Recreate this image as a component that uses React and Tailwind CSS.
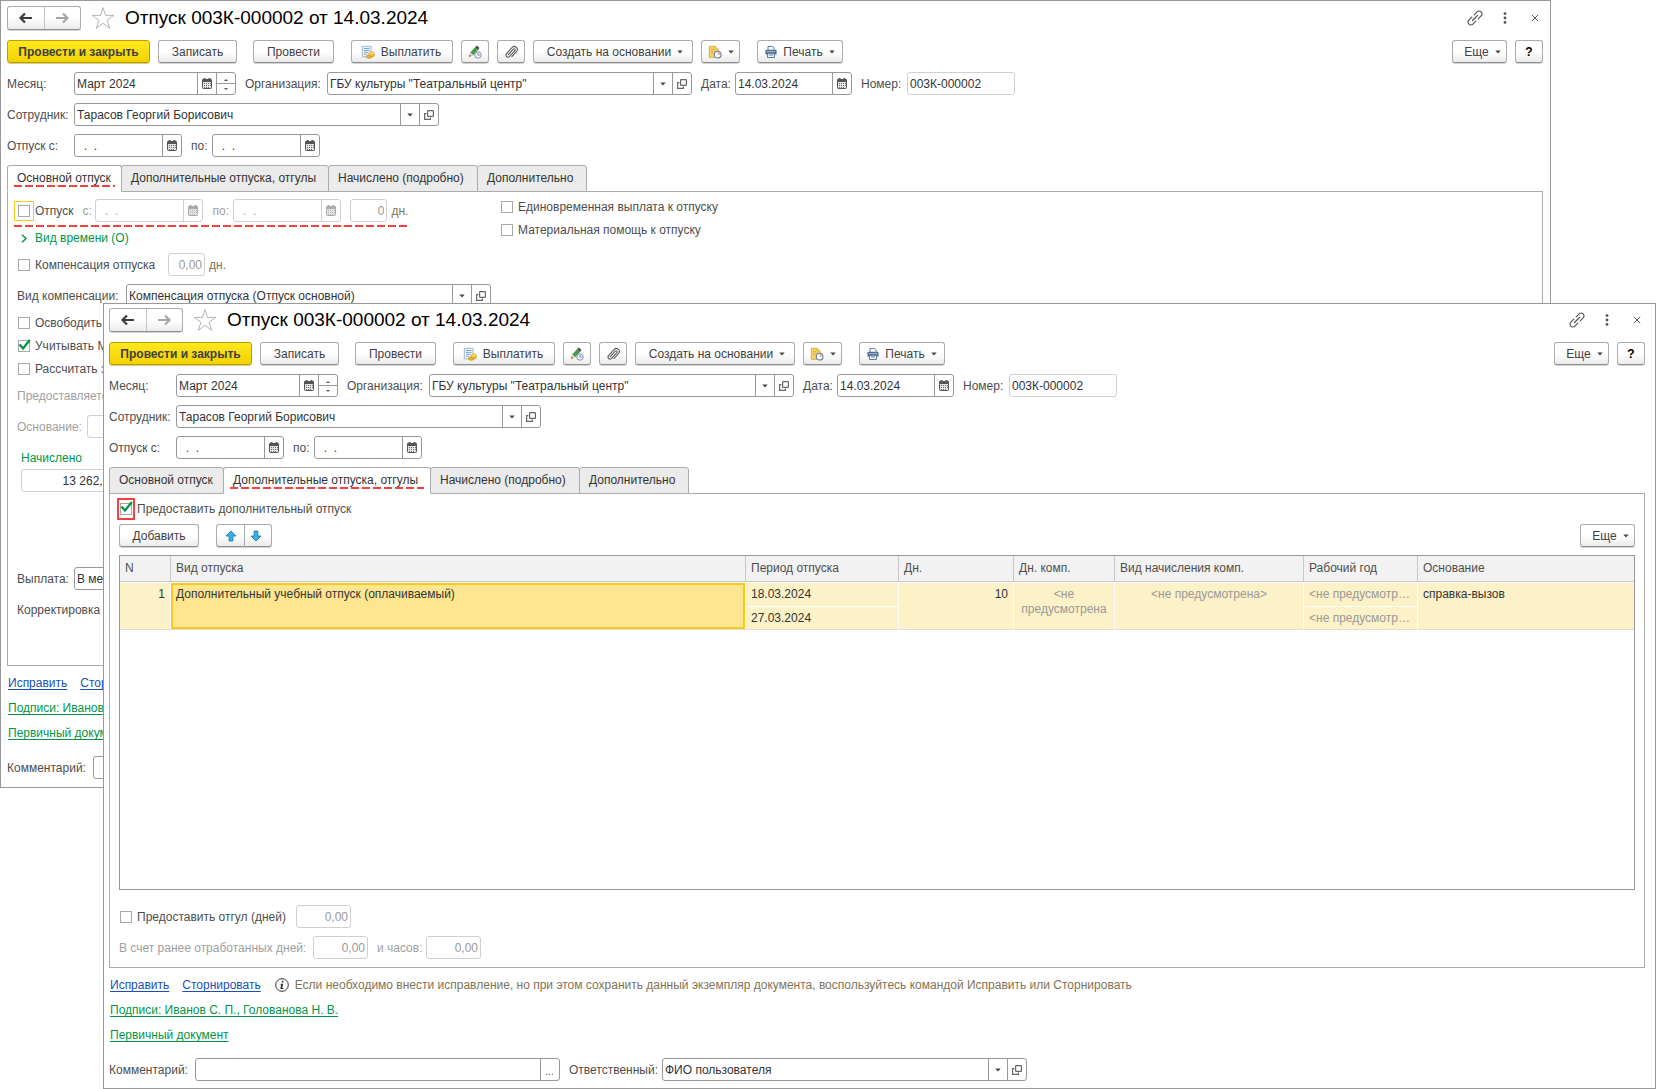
import React, { useId } from 'react';

/* ---------- icons ---------- */

const ArrowIcon = ({ className = '', flip }) => (
  <svg viewBox="0 0 16 12" className={`h-3 w-4 ${className} ${flip ? 'rotate-180' : ''}`} aria-hidden="true">
    <path d="M7 1.500L2.500 6l4.500 4.500M2.500 6H14" fill="none" stroke="currentColor" strokeWidth="2.200" />
  </svg>
);

const StarIcon = () => (
  <svg viewBox="0 0 24 24" className="h-6 w-6 text-[#b4b4b4]" aria-hidden="true">
    <path d="M12 1.500l2.500 7.900h8.300l-6.700 4.800 2.600 8L12 17.300l-6.700 4.900 2.600-8L1.200 9.400h8.300z" fill="none" stroke="currentColor" strokeWidth="1" />
  </svg>
);

const LinkIcon = () => (
  <svg viewBox="0 0 16 16" className="h-4 w-4 text-[#555]" fill="none" stroke="currentColor" strokeWidth="1.2" strokeLinecap="round" aria-hidden="true">
    <path d="M5.500 10.500l5-5" />
    <path d="M7.200 4.800l2.900-2.900a2.700 2.700 0 0 1 4 0 2.700 2.700 0 0 1 0 4l-2.900 2.900" />
    <path d="M8.800 11.200l-2.900 2.900a2.700 2.700 0 0 1-4 0 2.700 2.700 0 0 1 0-4l2.900-2.900" />
  </svg>
);

const DotsIcon = () => (
  <svg viewBox="0 0 4 12" className="h-3 w-1 text-[#555]" fill="currentColor" aria-hidden="true">
    <circle cx="2" cy="1.6" r="1.4" />
    <circle cx="2" cy="6" r="1.4" />
    <circle cx="2" cy="10.4" r="1.4" />
  </svg>
);

const CloseIcon = () => (
  <svg viewBox="0 0 8 8" className="h-2 w-2 text-[#555]" aria-hidden="true">
    <path d="M.8.8l6.400 6.400M7.200.8L.8 7.200" stroke="currentColor" strokeWidth="1" />
  </svg>
);

const Caret = () => (
  <svg viewBox="0 0 6 4" className="h-1 w-1.5 shrink-0 text-[#444]" aria-hidden="true">
    <path d="M.3.4h5.400L3 3.400z" fill="currentColor" />
  </svg>
);

const CalendarIcon = () => (
  <svg viewBox="0 0 10 11" className="h-[11px] w-2.5" aria-hidden="true">
    <path d="M1.500 0h2v2h-2zM6.500 0h2v2h-2z" fill="currentColor" />
    <rect x=".5" y="1.500" width="9" height="9" rx=".8" fill="#e4e4e4" stroke="currentColor" />
    <path d="M0 1.500h10V4H0z" fill="currentColor" />
    <path d="M2 5h1v1H2zM4 5h1v1H4zM6 5h1v1H6zM8 5h1v1H8zM2 7h1v1H2zM4 7h1v1H4zM6 7h1v1H6zM8 7h1v1H8zM2 9h1v1H2zM4 9h1v1H4zM6 9h1v1H6z" fill="currentColor" opacity=".8" />
  </svg>
);

const OpenIcon = () => (
  <svg viewBox="0 0 10 10" className="h-2.5 w-2.5 text-[#666]" fill="none" stroke="currentColor" strokeWidth="1.200" aria-hidden="true">
    <rect x="3.600" y=".6" width="5.800" height="5.800" rx=".6" />
    <path d="M2.400 3.600H.6v5.800h5.800V7.600" />
  </svg>
);

const PayIcon = () => (
  <svg viewBox="0 0 16 16" className="h-3.5 w-3.5 shrink-0" aria-hidden="true">
    <path d="M1.500 1.500h10v12h-10z" fill="#eef5fb" stroke="#8fb0cc" />
    <path d="M3.300 4h6.400M3.300 6.200h6.400M3.300 8.400h5M3.300 10.600h3.400" stroke="#6f9cc4" />
    <ellipse cx="9.300" cy="13.200" rx="3.300" ry="2" fill="#f0b52c" stroke="#c98412" strokeWidth=".6" />
    <ellipse cx="12.300" cy="11.600" rx="3.200" ry="2" fill="#f3b935" stroke="#c98412" strokeWidth=".6" />
    <ellipse cx="12.100" cy="9.600" rx="3.200" ry="2" fill="#fbd661" stroke="#d8961c" strokeWidth=".6" />
  </svg>
);

const PencilClockIcon = () => (
  <svg viewBox="0 0 16 16" className="h-3.5 w-3.5" aria-hidden="true">
    <path d="M1 13.600l1.800-5.400L8 2.600l3.400 3.200-5.200 5.600z" fill="#3f9b4c" />
    <path d="M8 2.600l1.200-1.300c.5-.5 1.300-.5 1.800 0l1.500 1.400c.5.5.5 1.300 0 1.800l-1.100 1.300z" fill="#5a4a45" />
    <path d="M1 13.600l1.800-5.400 3.400 3.200z" fill="#f1c9a0" />
    <path d="M1 13.600l.8-2.400 1.500 1.400z" fill="#b03a2e" />
    <circle cx="11.400" cy="11.400" r="3.700" fill="#f3f8fc" stroke="#7794ad" strokeWidth="1.100" />
    <path d="M11.400 9v2.500h2" fill="none" stroke="#57738c" />
  </svg>
);

const ClipIcon = () => (
  <svg viewBox="0 0 16 16" className="h-3.5 w-3.5 text-[#555]" fill="none" stroke="currentColor" strokeWidth="1.200" strokeLinecap="round" aria-hidden="true">
    <path d="M5 11l5.600-6.200a1.200 1.200 0 0 1 1.800 1.700L6.200 13.300a2.400 2.400 0 0 1-3.500-3.200l6.700-7.300a3.400 3.400 0 0 1 5 4.600L9 13.200" />
  </svg>
);

const ReportIcon = () => (
  <svg viewBox="0 0 16 16" className="h-3.5 w-3.5 shrink-0" aria-hidden="true">
    <path d="M1.500 1.500h7l3 3v9.500h-10z" fill="#f7d56b" stroke="#d3a531" />
    <path d="M8.500 1.500v3h3" fill="#fff3c2" stroke="#d3a531" />
    <path d="M3.300 5h4M3.300 7.200h6M3.300 9.400h3" stroke="#d9ac3c" />
    <circle cx="11" cy="11" r="3.800" fill="#fff" stroke="#5b7fa6" strokeWidth="1.300" />
    <path d="M11 11V7.600a3.400 3.400 0 0 1 3.400 3.400z" fill="#e6a4a4" />
  </svg>
);

const PrinterIcon = () => (
  <svg viewBox="0 0 14 14" className="h-3 w-3 shrink-0" aria-hidden="true">
    <path d="M3.500 4.500v-4h5.500l1.500 1.500v2.500" fill="#fff" stroke="#3e5f82" />
    <path d="M1.500 4.500h11c.6 0 1 .4 1 1v4.500h-13V5.500c0-.6.4-1 1-1z" fill="#4a6f97" />
    <path d="M2 6.700h10" stroke="#c5d6e6" />
    <path d="M3 8.500h8v5H3z" fill="#fff" stroke="#3e5f82" />
    <path d="M4.500 10.500h5" stroke="#3e5f82" />
  </svg>
);

const BlueArrow = ({ down }) => (
  <svg viewBox="0 0 12 12" className={`h-3 w-3 ${down ? 'rotate-180' : ''}`} aria-hidden="true">
    <path d="M6 1L11 6H7.900v5H4.100V6H1z" fill="#35aee6" stroke="#1f7fb8" strokeWidth=".9" strokeLinejoin="round" />
  </svg>
);

const InfoIcon = () => (
  <svg viewBox="0 0 14 14" className="h-3.5 w-3.5 shrink-0" aria-hidden="true">
    <circle cx="7" cy="7" r="6.300" fill="#fff" stroke="#333" strokeWidth="1" />
    <path d="M6.800 2.800h1.600v1.600H6.800zM5.500 5.700h2.600l-.8 4.200h1.100v1H5.300l.8-4.200h-.6z" fill="#333" />
  </svg>
);

/* ---------- controls ---------- */

const Btn = ({ className = '', children, ...rest }) => (
  <button
    type="button"
    className={`flex h-[23px] shrink-0 items-center justify-center rounded-[3px] border border-[#ababab] border-b-[#8f8f8f] bg-linear-to-b from-white from-50% to-[#ebebeb] text-[12px] text-[#404040] shadow-[0_1px_0_#d4d4d4] ${className}`}
    {...rest}
  >
    {children}
  </button>
);

const Box = ({ disabled, className = '', children }) => (
  <div
    className={`flex h-[23px] shrink-0 overflow-hidden rounded-[3px] border bg-white ${
      disabled ? 'border-[#d0d0d0] text-[#999]' : 'border-[#989898] text-[#333]'
    } ${className}`}
  >
    {children}
  </div>
);

const Text = ({ className = '', ...rest }) => (
  <input type="text" className={`h-full min-w-0 flex-1 bg-transparent px-0.5 text-[12px] outline-none ${className}`} {...rest} />
);

const Side = ({ disabled, children, ...rest }) => (
  <button
    type="button"
    disabled={disabled}
    className={`flex w-[19px] shrink-0 items-center justify-center border-l pr-px ${
      disabled ? 'border-[#d0d0d0] text-[#aaa]' : 'border-[#989898] text-[#555]'
    }`}
    {...rest}
  >
    {children}
  </button>
);

const DateBox = ({ id, value = '  .  .', width = 'w-[108px]', disabled }) => (
  <Box disabled={disabled} className={width}>
    <Text id={id} defaultValue={value} disabled={disabled} />
    <Side disabled={disabled} aria-label="Выбрать дату"><CalendarIcon /></Side>
  </Box>
);

const RefBox = ({ id, value, width = 'w-[365px]' }) => (
  <Box className={width}>
    <Text id={id} defaultValue={value} />
    <Side aria-label="Выбрать из списка"><Caret /></Side>
    <Side aria-label="Открыть"><OpenIcon /></Side>
  </Box>
);

const NumBox = ({ id, value, width, disabled = true, label }) => (
  <Box disabled={disabled} className={width}>
    <Text id={id} aria-label={label} defaultValue={value} disabled={disabled} className="text-right" />
  </Box>
);

const Label = ({ className = '', children, ...rest }) => (
  <label className={`shrink-0 whitespace-nowrap text-[#4d4d4d] ${className}`} {...rest}>{children}</label>
);

const Check = ({ label, checked, frame = '' }) => (
  <label className="flex shrink-0 items-center whitespace-nowrap text-[#4d4d4d]">
    <span className={`relative mr-1 flex h-5 w-[14px] items-center justify-center ${frame}`}>
      <input type="checkbox" defaultChecked={checked} className="peer h-3 w-3 appearance-none border border-[#a8a8a8] bg-white" />
      <svg viewBox="0 0 14 14" className="pointer-events-none absolute inset-x-0 top-0.5 mx-auto hidden h-3.5 w-3.5 peer-checked:block" aria-hidden="true">
        <path d="M2.500 6.500L6 10.500L12.800 2" fill="none" stroke="#009646" strokeWidth="2.300" />
      </svg>
    </span>
    {label}
  </label>
);

const dashes = 'h-0.5 bg-[repeating-linear-gradient(90deg,#f8403f_0_8px,transparent_8px_11px)]';

/* ---------- shared parts of the document form ---------- */

const Header = () => (
  <header className="flex h-6 items-center">
    <div className="flex h-6 w-[74px] overflow-hidden rounded-[3px] border border-[#ababab] border-b-[#8f8f8f] bg-linear-to-b from-white from-50% to-[#ebebeb] shadow-[0_1px_0_#d4d4d4]">
      <button type="button" aria-label="Назад" className="flex flex-1 items-center justify-center border-r border-[#c4c4c4] text-[#3c3c3c]"><ArrowIcon /></button>
      <button type="button" aria-label="Вперед" className="flex flex-1 items-center justify-center text-[#a6a6a6]"><ArrowIcon flip /></button>
    </div>
    <button type="button" aria-label="Избранное" className="ml-2.5"><StarIcon /></button>
    <h1 className="ml-2.5 flex-1 whitespace-nowrap text-[19px] leading-6 text-black">Отпуск 003К-000002 от 14.03.2024</h1>
    <div className="flex items-center">
      <button type="button" aria-label="Ссылка"><LinkIcon /></button>
      <button type="button" aria-label="Меню" className="ml-5"><DotsIcon /></button>
      <button type="button" aria-label="Закрыть" className="ml-6 mr-1"><CloseIcon /></button>
    </div>
  </header>
);

const Toolbar = () => (
  <div className="mt-2.5 flex items-center gap-2">
    <button
      type="button"
      className="flex h-[23px] w-[143px] items-center justify-center rounded-[3px] border border-[#b79f00] bg-linear-to-b from-[#ffe71e] to-[#f2d200] text-[12px] font-bold text-[#404040] shadow-[0_1px_0_#d8cc8a]"
    >
      Провести и закрыть
    </button>
    <Btn className="w-[79px]">Записать</Btn>
    <Btn className="ml-2 w-[81px]">Провести</Btn>
    <Btn className="ml-[9px] w-[102px] gap-1.5 pr-0.5"><PayIcon />Выплатить</Btn>
    <Btn className="w-7" aria-label="Подписать"><PencilClockIcon /></Btn>
    <Btn className="w-7" aria-label="Файлы"><ClipIcon /></Btn>
    <Btn className="w-[160px] gap-1.5 pl-1">Создать на основании<Caret /></Btn>
    <Btn className="w-[39px] gap-1.5" aria-label="Отчеты"><ReportIcon /><Caret /></Btn>
    <Btn className="ml-[9px] w-[86px] gap-1.5"><PrinterIcon />Печать<Caret /></Btn>
    <div className="flex-1" />
    <Btn className="w-[55px] gap-1.5 pl-1.5">Еще<Caret /></Btn>
    <Btn className="w-7 font-bold text-black" aria-label="Справка">?</Btn>
  </div>
);

const DocumentFields = () => {
  const id = useId();
  return (
    <div className="mt-[9px] flex flex-col gap-2">
      <div className="flex items-center">
        <Label htmlFor={id + 'm'} className="w-[67px]">Месяц:</Label>
        <Box className="w-[162px]">
          <Text id={id + 'm'} defaultValue="Март 2024" />
          <Side aria-label="Выбрать месяц"><CalendarIcon /></Side>
          <div className="flex w-[19px] flex-col border-l border-[#989898]">
            <button type="button" aria-label="Следующий месяц" className="flex h-[11px] items-center justify-center border-b border-[#989898] pt-1">
              <svg viewBox="0 0 4 2" className="h-0.5 w-1" aria-hidden="true"><path d="M0 2L2 0l2 2z" fill="#555" /></svg>
            </button>
            <button type="button" aria-label="Предыдущий месяц" className="flex flex-1 items-center justify-center">
              <svg viewBox="0 0 4 2" className="h-0.5 w-1" aria-hidden="true"><path d="M0 0l2 2 2-2z" fill="#555" /></svg>
            </button>
          </div>
        </Box>
        <Label htmlFor={id + 'o'} className="ml-[9px] w-[82px]">Организация:</Label>
        <RefBox id={id + 'o'} value={'ГБУ культуры "Театральный центр"'} />
        <Label htmlFor={id + 'd'} className="ml-[9px] w-[34px]">Дата:</Label>
        <DateBox id={id + 'd'} value="14.03.2024" width="w-[117px]" />
        <Label htmlFor={id + 'n'} className="ml-[9px] w-[46px]">Номер:</Label>
        <div className="flex h-[23px] w-[108px] rounded-[3px] border border-[#d0d0d0] text-[#333]">
          <Text id={id + 'n'} defaultValue="003К-000002" readOnly />
        </div>
      </div>
      <div className="flex items-center">
        <Label htmlFor={id + 's'} className="w-[67px]">Сотрудник:</Label>
        <RefBox id={id + 's'} value="Тарасов Георгий Борисович" />
      </div>
      <div className="flex items-center">
        <Label htmlFor={id + 'f'} className="w-[67px]">Отпуск с:</Label>
        <DateBox id={id + 'f'} />
        <Label htmlFor={id + 't'} className="ml-[9px] w-[21px]">по:</Label>
        <DateBox id={id + 't'} />
      </div>
    </div>
  );
};

const tabs = [
  ['Основной отпуск', 'w-[115px]'],
  ['Дополнительные отпуска, отгулы', 'w-[208px]'],
  ['Начислено (подробно)', 'w-[150px]'],
  ['Дополнительно', 'w-[110px]'],
];

const Tabs = ({ active }) => (
  <div role="tablist" className="relative z-10 -mb-px mt-2 flex">
    {tabs.map(([name, width], i) => (
      <button
        key={name}
        type="button"
        role="tab"
        aria-selected={i === active}
        className={`relative flex h-[27px] items-center whitespace-nowrap rounded-t-[3px] border border-[#ababab] pb-0.5 pl-[9px] text-[12px] text-[#333] ${width} ${
          i > 0 ? '-ml-px' : ''
        } ${i === active ? 'z-10 border-b-white bg-white' : 'bg-[#ebebeb]'}`}
      >
        {name}
        {i === active && <span className={`absolute inset-x-1.5 bottom-1 ${dashes}`} />}
      </button>
    ))}
  </div>
);

const Footer = ({ hint }) => {
  const id = useId();
  return (
    <footer className="text-[12px]">
      <div className="mt-[7px] flex h-5 items-center px-px">
        <a href="#fix" className="text-[#1a4fb8] underline underline-offset-2">Исправить</a>
        <a href="#storno" className="ml-[13px] text-[#1a4fb8] underline underline-offset-2">Сторнировать</a>
        <span className="ml-3.5 flex items-center gap-1.5 whitespace-nowrap text-[#7f7358]">
          <InfoIcon />
          {hint}
        </span>
      </div>
      <div className="mt-[5px] flex h-5 items-center px-px">
        <a href="#signs" className="text-[#009646] underline underline-offset-2">Подписи: Иванов С. П., Голованова Н. В.</a>
      </div>
      <div className="mt-[5px] flex h-5 items-center px-px">
        <a href="#source" className="text-[#009646] underline underline-offset-2">Первичный документ</a>
      </div>
      <div className="mt-[13px] flex items-center">
        <Label htmlFor={id + 'c'} className="w-[86px]">Комментарий:</Label>
        <Box className="w-[365px]">
          <Text id={id + 'c'} />
          <Side aria-label="Изменить комментарий"><span className="pt-1 text-[10px]">...</span></Side>
        </Box>
        <Label htmlFor={id + 'r'} className="ml-[9px] w-[93px]">Ответственный:</Label>
        <RefBox id={id + 'r'} value="ФИО пользователя" />
      </div>
    </footer>
  );
};

/* ---------- tab "Основной отпуск" ---------- */

const MainLeave = () => {
  const id = useId();
  return (
    <section className="flex h-[475px] border border-[#ababab] pl-[9px]">
      <div className="w-[483px] shrink-0 pt-[7px]">
        <div className="relative flex items-center">
          <Check label="Отпуск" frame="-ml-[3px] w-[20px]! mr-px! border border-[#fac917]" />
          <Label htmlFor={id + 'f'} className="ml-[9px] w-[13px] text-[#a0a0a0]!">с:</Label>
          <DateBox id={id + 'f'} disabled />
          <Label htmlFor={id + 't'} className="ml-[9px] w-[21px] text-[#a0a0a0]!">по:</Label>
          <DateBox id={id + 't'} disabled />
          <div className="ml-[9px] flex items-center gap-1 text-[#7f7358]">
            <NumBox value="0" width="w-[37px]" label="Дней отпуска" />
            дн.
          </div>
          <span className={`absolute -left-[3px] top-[26px] w-[395px] ${dashes}`} />
        </div>
        <button type="button" className="mt-1.5 flex h-5 items-center text-[12px] text-[#009646]">
          <svg viewBox="0 0 6 9" className="ml-1 mr-2 h-[9px] w-1.5" aria-hidden="true"><path d="M1 .7l4 3.800-4 3.800" fill="none" stroke="currentColor" strokeWidth="1.500" /></svg>
          Вид времени (О)
        </button>
        <div className="mt-[5px] flex items-center">
          <div className="w-[151px]"><Check label="Компенсация отпуска" /></div>
          <div className="flex items-center gap-1 text-[#7f7358]">
            <NumBox value="0,00" width="w-[37px]" label="Дней компенсации" />
            дн.
          </div>
        </div>
        <div className="mt-2 flex items-center">
          <Label htmlFor={id + 'k'} className="w-[109px]">Вид компенсации:</Label>
          <RefBox id={id + 'k'} value="Компенсация отпуска (Отпуск основной)" />
        </div>
        <div className="mt-1 grid auto-rows-[23px] items-center">
          <Check label="Освободить ставку на период отпуска" />
          <Check label="Учитывать МРОТ при расчете" checked />
          <Check label="Рассчитать зарплату за Март 2024" />
        </div>
        <p className="mt-[5px] h-[22px] leading-[22px] text-[#a0a0a0]">Предоставляется отпуск за период работы</p>
        <div className="mt-2 flex items-center">
          <Label htmlFor={id + 'b'} className="w-[70px] text-[#a0a0a0]!">Основание:</Label>
          <Box disabled className="w-[365px]"><Text id={id + 'b'} disabled /></Box>
        </div>
        <div className="mt-2.5 flex flex-col pl-1">
          <Label htmlFor={id + 'a'} className="h-5 leading-5 text-[#009646]!">Начислено</Label>
          <div className="mt-px flex h-[23px] w-[98px] rounded-[3px] border border-[#d0d0d0] text-[#333]">
            <Text id={id + 'a'} defaultValue="13 262,00" readOnly className="text-right" />
          </div>
        </div>
        <div className="mt-[75px] flex items-center">
          <Label htmlFor={id + 'p'} className="w-[57px]">Выплата:</Label>
          <RefBox id={id + 'p'} value="В межрасчетный период" />
        </div>
        <p className="mt-[9px] h-[23px] leading-[23px] text-[#4d4d4d]">Корректировка выплаты:</p>
      </div>
      <div className="grid h-[50px] auto-rows-[23px] items-center pt-[3px]">
        <Check label="Единовременная выплата к отпуску" />
        <Check label="Материальная помощь к отпуску" />
      </div>
    </section>
  );
};

/* ---------- tab "Дополнительные отпуска, отгулы" ---------- */

const columns = [
  ['N', 'w-[51px]'],
  ['Вид отпуска', ''],
  ['Период отпуска', 'w-[153px]'],
  ['Дн.', 'w-[115px]'],
  ['Дн. комп.', 'w-[101px]'],
  ['Вид начисления комп.', 'w-[189px]'],
  ['Рабочий год', 'w-[114px]'],
  ['Основание', 'w-[216px]'],
];

const Cell = ({ className = '', children }) => (
  <td className={`h-12 border-b border-r border-t border-b-[#dcdcdc] border-r-white border-t-white bg-[#fdf1c7] p-0 align-top leading-[15px] ${className}`}>{children}</td>
);

const Pair = ({ top, bottom, className = '' }) => (
  <div className={`flex flex-col ${className}`}>
    <span className="h-6 truncate border-b border-white px-[5px] leading-[22px]">{top}</span>
    <span className="h-[22px] truncate px-[5px] leading-[22px]">{bottom}</span>
  </div>
);

const LeaveTable = () => (
  <div className="mt-2 min-h-[335px] border border-[#989898]">
    <table className="w-full table-fixed border-separate border-spacing-0 text-[12px]">
      <thead>
        <tr>
          {columns.map(([name, width]) => (
            <th key={name} className={`h-[26px] border-b border-r border-[#c8c8c8] bg-[#f2f2f2] px-[5px] pb-0.5 pt-0 text-left font-normal text-[#4d4d4d] last:border-r-0 ${width}`}>{name}</th>
          ))}
        </tr>
      </thead>
      <tbody className="text-[#333]">
        <tr>
          <Cell className="px-[5px]! pt-1! text-right">1</Cell>
          <Cell>
            <div className="h-[46px] border-2 border-[#fac917] bg-[#fee691] px-[3px] pt-0.5">Дополнительный учебный отпуск (оплачиваемый)</div>
          </Cell>
          <Cell><Pair top="18.03.2024" bottom="27.03.2024" /></Cell>
          <Cell className="px-[5px]! pt-1! text-right">10</Cell>
          <Cell className="pt-1! text-center text-[#999]">&lt;не<br />предусмотрена</Cell>
          <Cell className="pt-1! text-center text-[#999]">&lt;не предусмотрена&gt;</Cell>
          <Cell><Pair top="<не предусмотрена>" bottom="<не предусмотрена>" className="text-[#999]" /></Cell>
          <Cell className="border-r-0 px-[5px]! pt-1!">справка-вызов</Cell>
        </tr>
      </tbody>
    </table>
  </div>
);

const ExtraLeave = () => {
  const id = useId();
  return (
    <section className="border border-[#ababab] px-[9px] pb-2 pt-1">
      <div className="flex items-center">
        <Check label="Предоставить дополнительный отпуск" checked frame="-ml-[2px] w-[18px]! h-[22px]! mr-0.5! outline-2 -outline-offset-2 outline-[#f8403f]" />
      </div>
      <div className="mt-1 flex items-center">
        <Btn className="w-20">Добавить</Btn>
        <div className="ml-[17px] flex">
          <Btn className="w-7 rounded-r-none border-r-0" aria-label="Вверх"><BlueArrow /></Btn>
          <Btn className="w-7 rounded-l-none pr-1" aria-label="Вниз"><BlueArrow down /></Btn>
        </div>
        <div className="flex-1" />
        <Btn className="w-[55px] gap-1.5 pl-1.5">Еще<Caret /></Btn>
      </div>
      <LeaveTable />
      <div className="mt-[15px] flex items-center">
        <div className="w-[177px]"><Check label="Предоставить отгул (дней)" /></div>
        <NumBox value="0,00" width="w-[55px]" label="Дней отгула" />
      </div>
      <div className="mt-2 flex items-center">
        <Label htmlFor={id + 'w'} className="w-[194px] text-[#a0a0a0]!">В счет ранее отработанных дней:</Label>
        <NumBox id={id + 'w'} value="0,00" width="w-[55px]" />
        <Label htmlFor={id + 'h'} className="ml-[9px] w-[49px] text-[#a0a0a0]!">и часов:</Label>
        <NumBox id={id + 'h'} value="0,00" width="w-[55px]" />
      </div>
    </section>
  );
};

const hint = 'Если необходимо внести исправление, но при этом сохранить данный экземпляр документа, воспользуйтесь командой Исправить или Сторнировать';

export default function App() {
  return (
    <div className="relative overflow-hidden bg-white pl-[103px] pt-[303px] font-['Liberation_Sans',Arial,sans-serif] text-[12px] leading-4">
      <main className="absolute left-0 right-[105px] top-0 overflow-hidden border border-[#989898] bg-white pb-2 pl-1.5 pr-[7px] pt-[5px]">
        <Header />
        <Toolbar />
        <DocumentFields />
        <Tabs active={0} />
        <MainLeave />
        <Footer hint={hint} />
      </main>
      <div className="relative z-20 border border-[#989898] bg-white pb-[7px] pl-[5px] pr-[10px] pt-1">
        <Header />
        <Toolbar />
        <DocumentFields />
        <Tabs active={1} />
        <ExtraLeave />
        <Footer hint={hint} />
      </div>
    </div>
  );
}
